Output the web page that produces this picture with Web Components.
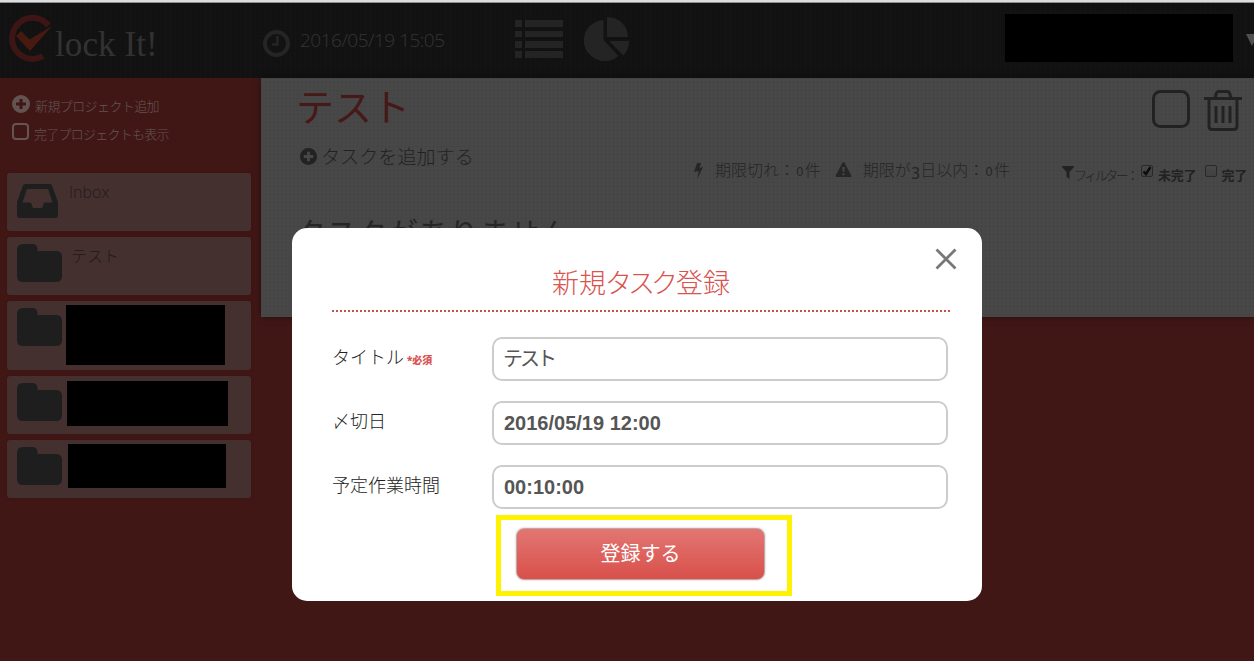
<!DOCTYPE html>
<html lang="ja">
<head>
<meta charset="utf-8">
<title>Clock It!</title>
<style>
  body {
    margin: 0;
    overflow: hidden;
    font-family: 'Open Sans', 'Noto Sans CJK JP', sans-serif;
    font-weight: 300;
  }
</style>
</head>
<body>
<clock-app></clock-app>

<script>
const define = (name, html) => {
  const template = document.createElement('template')
  template.innerHTML = html

  customElements.define(name,
    class extends HTMLElement {
      constructor () {
        super()
        this.attachShadow({ mode: 'open' })
          .appendChild(template.content.cloneNode(true))
      }
    }
  )
}

const icons = {
  plus: '<svg viewBox="0 0 18 18"><path fill-rule="evenodd" d="M9 0a9 9 0 1 0 0 18A9 9 0 0 0 9 0zM7.500 4h3v3.500H14v3h-3.500V14h-3v-3.500H4v-3h3.500z"/></svg>',
  box: '<svg viewBox="0 0 38 38"><rect x="1.500" y="1.500" width="35" height="35" rx="7" fill="none" stroke="currentColor" stroke-width="3"/></svg>',
  smallbox: '<svg viewBox="0 0 17 17"><rect x="1" y="1" width="15" height="15" rx="3" fill="none" stroke="currentColor" stroke-width="2"/></svg>',
  trash: '<svg viewBox="0 0 38 41"><g fill="none" stroke="currentColor" stroke-width="3"><path d="M0 8.500h38M11 8l1.500-5q.5-1.500 2-1.500h9q1.500 0 2 1.500L27 8M5 9v27q0 3.500 3 3.500h22q3 0 3-3.500V9"/><path d="M12 16v17M19 16v17M26 16v17"/></g></svg>',
  inbox: '<svg viewBox="0 0 41 34"><path fill-rule="evenodd" d="M8 0h25q1.500 0 2 1.500L41 18v13q0 3-3 3H3q-3 0-3-3V18L6 1.500Q6.500 0 8 0zM10 5L5.500 18.500H13q1 0 1.300 1l1.200 3.500q.3 1 1.300 1h7.400q1 0 1.300-1l1.200-3.500q.3-1 1.300-1h7.500L31 5z"/></svg>',
  folder: '<svg viewBox="0 0 45 38"><path d="M6 0h9q5.500 0 5.500 5.500V7H39q6 0 6 6v19q0 6-6 6H6q-6 0-6-6V6Q0 0 6 0z"/></svg>',
  clock: '<svg viewBox="0 0 27 27"><g fill="none" stroke="currentColor"><circle cx="13.500" cy="13.500" r="11.500" stroke-width="4"/><path d="M14.500 6v8.500H9" stroke-width="2.500"/></g></svg>',
  list: '<svg viewBox="0 0 48 38"><path d="M0 0h7v7H0zM10 0h38v7H10zM0 11h7v6H0zM10 11h38v6H10zM0 21h7v7H0zM10 21h38v7H10zM0 31h7v7H0zM10 31h38v7H10z"/></svg>',
  pie: '<svg viewBox="0 0 46 44"><path d="M20.500 3v20l15 16A21 20.500 0 1 1 20.500 3zM24 0a21 20 0 0 1 21 20H24zM26 24h20q0 8-5.500 14.500z"/></svg>',
  bolt: '<svg viewBox="0 0 9 16"><path d="M3 0h4L5.500 5 9 4 3.300 16l1.400-8L0 9z"/></svg>',
  warning: '<svg viewBox="0 0 16 15"><path fill-rule="evenodd" d="M8 0q.7 0 1 .7l6.800 12.800Q16.300 15 15 15H1q-1.300 0-.8-1.500L7 .7Q7.300 0 8 0zM6.800 5l.5 5h1.400l.5-5zM7 11.200v2h2v-2z"/></svg>',
  filter: '<svg viewBox="0 0 12 13"><path d="M0 0h12v1L7.500 6v7L4.500 10.500V6L0 1z"/></svg>',
  close: '<svg viewBox="0 0 20 20"><path d="M1.500 1.500l17 17M18.500 1.500l-17 17" fill="none" stroke="currentColor" stroke-width="2.800" stroke-linecap="square"/></svg>',
  logo: '<svg viewBox="0 0 46 48"><path d="M41.500 11.500A20.500 20.500 0 1 0 36 42" fill="none" stroke="#3c1514" stroke-width="6"/><path d="M9 22l5-5 8.500 8.500L45 12 23 37z" fill="#48190e"/></svg>',
  caret: '<svg viewBox="0 0 12 12"><path d="M0 0h12L6 12z"/></svg>'
}

customElements.define('app-icon',
  class extends HTMLElement {
    constructor () {
      super()
      this.attachShadow({ mode: 'open' })
    }

    connectedCallback () {
      this.shadowRoot.innerHTML = `
        <style>
          :host { display: block; flex: none; }
          svg { display: block; width: 100%; height: 100%; fill: currentColor; overflow: visible; }
        </style>
        ${icons[this.getAttribute('name')]}
      `
    }
  }
)

define('black-box', `
  <style>:host { display: block; flex: none; background: #000; }</style>
`)

define('check-box', `
  <style>
    :host {
      display: block;
      flex: none;
      box-sizing: border-box;
      width: 12px;
      height: 12px;
      border: 1px solid #292929;
      border-radius: 2px;
      background: linear-gradient(#484848, #404040);
    }
    svg { display: none; width: 10px; height: 10px; }
    :host([checked]) svg { display: block; }
  </style>
  <svg viewBox="0 0 10 10"><path d="M1.500 5.500L4 8l4.500-7" fill="none" stroke="#0c0c0c" stroke-width="2.400"/></svg>
`)

define('app-header', `
  <style>
    :host {
      display: flex;
      box-sizing: border-box;
      height: 78px;
      border-top: 2px solid #dcdfe0;
      background:
        repeating-linear-gradient(90deg, rgba(255, 255, 255, .006) 0 1px, transparent 1px 5px),
        repeating-linear-gradient(rgba(0, 0, 0, .06) 0 1px, transparent 1px 4px),
        #121212;
      box-shadow: inset 0 1px #8f8f8f;
      color: #242424;
      align-items: flex-start;
    }
    .logo { display: flex; width: 253px; margin: 12px 0 0 9px; }
    .logo app-icon { width: 46px; height: 48px; margin-left: -2px; }
    .logo span {
      font: 35px/40px 'Liberation Serif', serif;
      margin: 11px 0 0 2px;
      color: #323232;
      letter-spacing: .1px;
    }
    .time { display: flex; width: 253px; margin-top: 28px; color: #252525; }
    .time app-icon { width: 27px; height: 27px; margin-left: 1px; }
    .time span {
      margin: -4px 0 0 10px;
      font: 300 19px/28px 'Open Sans', sans-serif;
      letter-spacing: -.5px;
      color: #343434;
    }
    .list { width: 48px; height: 38px; margin-top: 18px; }
    .pie { width: 46px; height: 44px; margin: 15px 0 0 20px; }
    black-box { width: 228px; height: 48px; margin: 12px 13px 0 auto; }
    .caret { width: 12px; height: 12px; margin: 32px -4px 0 0; color: #505050; }
  </style>
  <div class="logo"><app-icon name="logo"></app-icon><span>lock It!</span></div>
  <div class="time"><app-icon name="clock"></app-icon><span>2016/05/19 15:05</span></div>
  <app-icon class="list" name="list"></app-icon>
  <app-icon class="pie" name="pie"></app-icon>
  <black-box></black-box>
  <app-icon class="caret" name="caret"></app-icon>
`)

customElements.define('project-card',
  class extends HTMLElement {
    constructor () {
      super()
      this.attachShadow({ mode: 'open' })
    }

    connectedCallback () {
      this.shadowRoot.innerHTML = `
        <style>
          :host {
            display: flex;
            box-sizing: border-box;
            height: 58px;
            border-radius: 3px;
            background: #453030;
            box-shadow: 0 0 3px rgba(0, 0, 0, .18);
            color: #1e1e1e;
            align-items: flex-start;
          }
          app-icon { width: 45px; height: 38px; margin: 7px 0 0 10px; }
          app-icon[name=inbox] { width: 41px; height: 34px; margin-top: 11px; }
        </style>
        <app-icon name="${this.getAttribute('icon')}"></app-icon>
        <slot></slot>
      `
    }
  }
)

define('project-sidebar', `
  <style>
    :host {
      display: block;
      box-sizing: border-box;
      width: 261px;
      padding: 16px 10px 0 7px;
      color: #635452;
    }
    .action {
      display: flex;
      height: 28px;
      padding-left: 5px;
      font-size: 13px;
      line-height: 18px;
      white-space: nowrap;
    }
    .action app-icon { width: 18px; height: 18px; margin-top: 1px; }
    .action span { margin: 3px 0 0 5px; letter-spacing: -.6px; }
    .action [name=smallbox] { width: 17px; height: 17px; }
    .action [name=smallbox] + span { letter-spacing: -.75px; }
    .cards { display: grid; gap: 6px; margin-top: 23px; }
    .name { font-size: 16px; line-height: 22px; color: #201a1a; }
    .inbox { margin: 8px 0 0 11px; }
    .test { margin: 8px 0 0 9px; }
  </style>
  <div class="action"><app-icon name="plus"></app-icon><span>新規プロジェクト追加</span></div>
  <div class="action"><app-icon name="smallbox"></app-icon><span>完了プロジェクトも表示</span></div>
  <div class="cards">
    <project-card icon="inbox"><span class="name inbox">Inbox</span></project-card>
    <project-card icon="folder"><span class="name test">テスト</span></project-card>
    <project-card icon="folder" style="height: 69px"><black-box style="width: 159px; height: 60px; margin: 4px 0 0 4px"></black-box></project-card>
    <project-card icon="folder"><black-box style="width: 161px; height: 45px; margin: 5px 0 0 5px"></black-box></project-card>
    <project-card icon="folder"><black-box style="width: 158px; height: 44px; margin: 4px 0 0 6px"></black-box></project-card>
  </div>
`)

define('task-panel', `
  <style>
    :host {
      display: block;
      box-sizing: border-box;
      height: 239px;
      padding: 6px 7px 0 38px;
      overflow: hidden;
      background:
        repeating-linear-gradient(90deg, rgba(0, 0, 0, .04) 0 1px, transparent 1px 4px),
        repeating-linear-gradient(rgba(0, 0, 0, .04) 0 1px, transparent 1px 4px),
        #484848;
      box-shadow: 0 0 8px rgba(0, 0, 0, .4);
      color: #222;
      white-space: nowrap;
    }
    .head { display: flex; height: 62px; }
    h1 {
      margin: -1px auto 0 -3px;
      font-size: 38px;
      line-height: 46px;
      font-weight: 400;
      color: #461817;
    }
    .head [name=box] { width: 38px; height: 38px; margin: 6px 14px 0 0; }
    .head [name=trash] { width: 38px; height: 41px; margin: 6px 5px 0 0; }
    .tools { display: flex; height: 62px; align-items: flex-start; }
    .add { display: flex; width: 395px; font-size: 19px; line-height: 26px; }
    .add app-icon { width: 17px; height: 17px; margin: 2px 0 0 1px; }
    .add span { margin: -2px 0 0 4px; letter-spacing: .1px; }
    .status { display: flex; font-size: 16px; line-height: 24px; padding-top: 12px; color: #262626; }
    .status [name=bolt] { width: 9px; height: 16px; margin: 5px 12px 0 0; }
    .status [name=warning] { width: 17px; height: 15px; margin: 4px 11px 0 14px; }
    .status b { font: 12px/1 'DejaVu Sans', sans-serif; margin: 0 1px; }
    .status .three { font-size: 15px; vertical-align: -3px; margin: 0; }
    .filter {
      display: flex;
      margin-left: auto;
      padding-top: 18px;
      font-size: 13px;
      line-height: 20px;
    }
    .filter [name=filter] { width: 12px; height: 13px; margin-top: 2px; }
    .filter span { letter-spacing: -2.500px; width: 67px; margin-top: 1px; }
    .filter check-box { margin-top: 1px; }
    .filter strong { margin: 1px 0 0 5px; letter-spacing: -.2px; font-weight: 700; }
    h2 {
      margin: 3px 0 0 -3px;
      font-size: 30px;
      line-height: 44px;
      font-weight: 400;
      letter-spacing: .6px;
      color: #262626;
    }
  </style>
  <div class="head">
    <h1>テスト</h1>
    <app-icon name="box"></app-icon>
    <app-icon name="trash"></app-icon>
  </div>
  <div class="tools">
    <div class="add"><app-icon name="plus"></app-icon><span>タスクを追加する</span></div>
    <div class="status">
      <app-icon name="bolt"></app-icon><div>期限切れ：<b>0</b>件</div>
      <app-icon name="warning"></app-icon><div>期限が<b class="three">3</b>日以内：<b>0</b>件</div>
    </div>
    <div class="filter">
      <app-icon name="filter"></app-icon><span>フィルター：</span>
      <check-box checked></check-box><strong>未完了</strong>
      <check-box style="margin-left: 9px"></check-box><strong style="margin-left: 4px">完了</strong>
    </div>
  </div>
  <h2>タスクがありません</h2>
`)

define('form-row', `
  <style>
    :host { display: flex; height: 64px; }
    .label {
      width: 160px;
      padding-top: 7px;
      font-size: 18px;
      line-height: 26px;
      color: #222;
      white-space: nowrap;
    }
    .field {
      box-sizing: border-box;
      width: 456px;
      height: 44px;
      padding: 0 10px;
      border: 2px solid #ccc;
      border-radius: 10px;
      font: bold 20px/40px 'Liberation Sans', 'Noto Sans CJK JP', sans-serif;
      color: #555;
    }
  </style>
  <div class="label"><slot name="label"></slot></div>
  <div class="field"><slot></slot></div>
`)

define('task-dialog', `
  <style>
    :host {
      display: block;
      box-sizing: border-box;
      width: 690px;
      height: 373px;
      padding: 0 32px 0 40px;
      border-radius: 15px;
      background: #fff;
    }
    .close { width: 20px; height: 20px; position: absolute; top: 21px; right: 26px; color: #777; }
    h3 {
      box-sizing: border-box;
      height: 84px;
      margin: 0 0 25px;
      padding-top: 37px;
      border-bottom: 2px dotted #c9504b;
      font-size: 27px;
      line-height: 36px;
      font-weight: 300;
      text-align: center;
      color: #d9534f;
    }
    h3 span { letter-spacing: -4px; margin: 0 2px 0 -1px; }
    small { font-size: 10px; font-weight: 900; color: #d9534f; margin-left: 3px; }
    .light { font-weight: 400; letter-spacing: -3px; margin-left: -1px; }
    .mark {
      box-sizing: border-box;
      width: 296px;
      height: 81px;
      margin: -14px 0 0 164px;
      padding: 8px 0 0 15px;
      border: 5px solid #fff200;
    }
    button {
      display: block;
      width: 249px;
      height: 52px;
      padding: 0 0 3px;
      border: 1px solid #c4a5a3;
      border-radius: 8px;
      background: linear-gradient(#e27672, #d9504b);
      box-shadow: 0 0 2px rgba(0, 0, 0, .3);
      font: 400 20px 'Noto Sans CJK JP', sans-serif;
      color: #fff;
    }
  </style>
  <app-icon class="close" name="close"></app-icon>
  <h3>新規<span>タスク</span>登録</h3>
  <form-row><span slot="label">タイトル<small>*必須</small></span><span class="light">テスト</span></form-row>
  <form-row><span slot="label">〆切日</span>2016/05/19 12:00</form-row>
  <form-row><span slot="label">予定作業時間</span>00:10:00</form-row>
  <div class="mark"><button type="button">登録する</button></div>
`)

define('clock-app', `
  <style>
    :host {
      display: block;
      position: relative;
      width: 1254px;
      height: 661px;
      overflow: hidden;
      background: #411716;
    }
    .body { display: flex; align-items: flex-start; height: 583px; }
    task-panel { flex: 1; }
    /* the dialog floats over the page */
    task-dialog { position: absolute; left: 292px; top: 228px; }
  </style>
  <app-header></app-header>
  <div class="body">
    <project-sidebar></project-sidebar>
    <task-panel></task-panel>
  </div>
  <task-dialog></task-dialog>
`)
</script>
</body>
</html>
